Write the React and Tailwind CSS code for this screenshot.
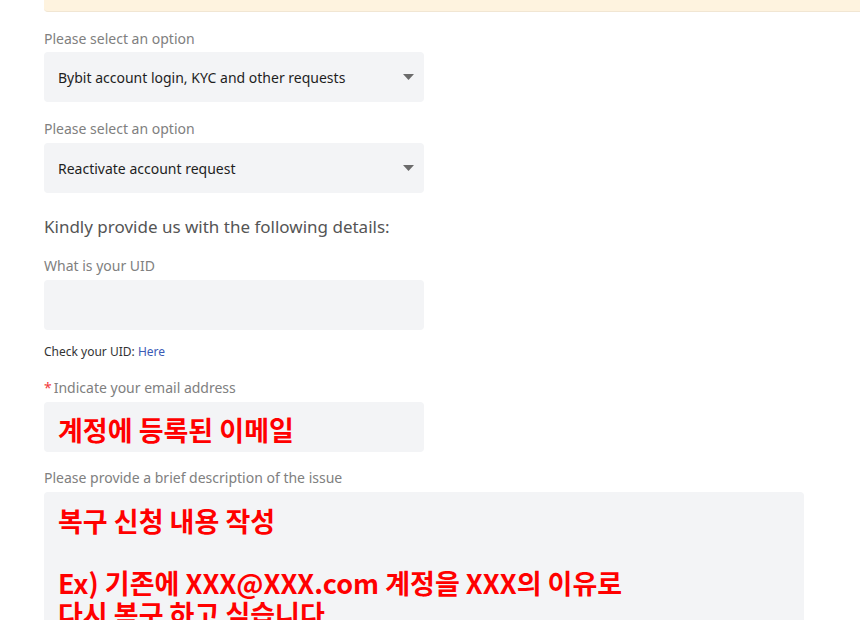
import { useState } from "react";

const font = { fontFamily: "'Noto Sans', 'Open Sans', sans-serif" };
const kr = { fontFamily: "'Noto Sans CJK KR', 'Noto Sans', sans-serif" };

function Caret() {
  return (
    <svg width="11" height="6" viewBox="0 0 11 6" className="shrink-0">
      <path d="M0 0h11L5.5 6z" fill="#6b6b6b" />
    </svg>
  );
}

function SelectBox({ value }) {
  return (
    <div className="flex h-[50px] w-[380px] items-center justify-between rounded-[4px] bg-[#f3f4f6] pl-[14px] pr-[10px] text-[14px] text-[#1e1e1e]">
      <span>{value}</span>
      <Caret />
    </div>
  );
}

export default function App() {
  const [uid, setUid] = useState("");

  return (
    <div className="min-h-screen bg-white" style={font}>
      <div className="pl-[44px]">
        <div className="h-[12px] w-full rounded-bl-[4px] border-b border-[#f1e6d3] bg-[#fef3df]" />

        <div className="mt-[19px] text-[14px] leading-[16px] text-[#808080]">Please select an option</div>
        <div className="mt-[5px]">
          <SelectBox value="Bybit account login, KYC and other requests" />
        </div>

        <div className="mt-[19px] text-[14px] leading-[16px] text-[#808080]">Please select an option</div>
        <div className="mt-[6px]">
          <SelectBox value="Reactivate account request" />
        </div>

        <h3 className="mt-[23px] text-[17px] leading-[22px] text-[#555555]">
          Kindly provide us with the following details:
        </h3>

        <div className="mt-[20px] text-[14px] leading-[16px] text-[#808080]">What is your UID</div>
        <input
          value={uid}
          onChange={(e) => setUid(e.target.value)}
          className="mt-[6px] block h-[50px] w-[380px] rounded-[4px] bg-[#f3f4f6] px-[14px] text-[14px] outline-none"
        />

        <div className="mt-[14px] text-[12px] leading-[16px] text-[#333333]">
          Check your UID: <span className="text-[#3b5bb5]">Here</span>
        </div>

        <div className="mt-[20px] flex items-center text-[14px] leading-[16px] text-[#808080]">
          <span className="mr-[2px] text-[#f23b3b]">*</span>
          Indicate your email address
        </div>
        <div
          className="mt-[6px] flex h-[50px] w-[380px] items-center rounded-[4px] bg-[#f3f4f6] px-[14px] pt-[6px] text-[27px] font-bold leading-[30px] text-[#ff0000]"
          style={kr}
        >
          계정에 등록된 이메일
        </div>

        <div className="mt-[18px] text-[14px] leading-[16px] text-[#808080]">
          Please provide a brief description of the issue
        </div>
        <div
          className="mt-[6px] h-[200px] w-[760px] rounded-[4px] bg-[#f3f4f6] px-[14px] pt-[13px] text-[27px] font-bold leading-[31px] text-[#ff0000]"
          style={kr}
        >
          <div>복구 신청 내용 작성</div>
          <div>&nbsp;</div>
          <div>Ex) 기존에 XXX@XXX.com 계정을 XXX의 이유로</div>
          <div>다시 복구 하고 싶습니다</div>
        </div>
      </div>
    </div>
  );
}
